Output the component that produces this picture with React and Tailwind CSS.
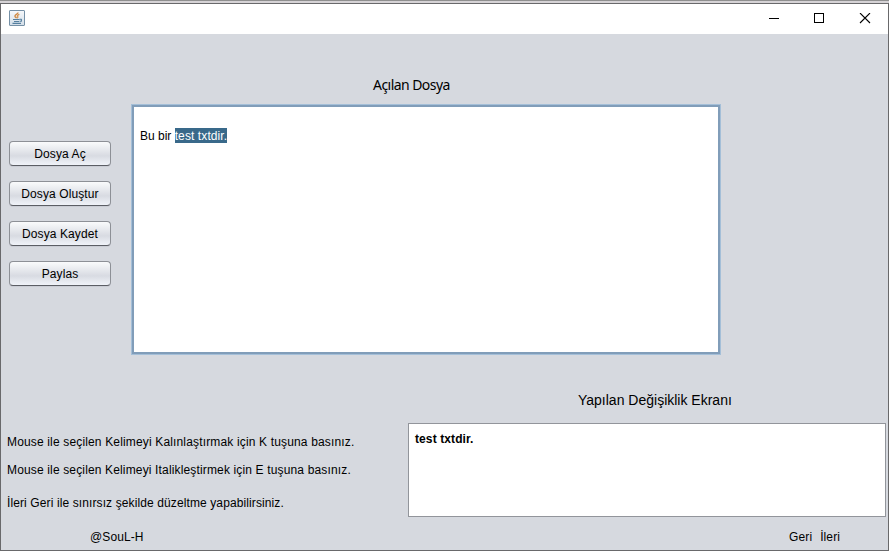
import React from "react";

function JavaIcon() {
  return (
    <svg width="16" height="16" viewBox="0 0 16 16" fill="none">
      <defs>
        <linearGradient id="tile" x1="0" y1="0" x2="0" y2="1">
          <stop offset="0" stopColor="#f6f8fa" />
          <stop offset="1" stopColor="#d3dee8" />
        </linearGradient>
      </defs>
      <rect x="0.5" y="0.5" width="15" height="15" rx="0.5" fill="url(#tile)" stroke="#7590a6" />
      <path d="M8.8 2.5C9.4 4.2 5.6 4.6 6 6.2C6.3 7.2 7.2 7.2 7.3 8.2" stroke="#d08a45" strokeWidth="1.5" />
      <path d="M10.4 4.4C8.6 5 8 5.6 8.7 6.4C9.2 7 8.8 7.7 8.2 8.2" stroke="#d4924f" strokeWidth="1.2" />
      <path d="M4 9.5H10.5M5 11.5H10M3.5 13.3H12" stroke="#557f9f" strokeWidth="1.2" />
      <path d="M10.5 9.3H12.4V11.3H10.5" stroke="#557f9f" strokeWidth="1.1" strokeLinejoin="round" />
    </svg>
  );
}

function TitleBar() {
  return (
    <header className="flex h-[30px] shrink-0 items-start justify-between bg-white pl-2">
      <div className="pt-[6px]">
        <JavaIcon />
      </div>
      <div className="flex pt-[9px] text-black">
        <svg width="46" height="11" shapeRendering="crispEdges">
          <path d="M18 5.5H28" stroke="currentColor" />
        </svg>
        <svg width="46" height="11" shapeRendering="crispEdges">
          <rect x="17.5" y="0.5" width="9" height="9" fill="none" stroke="currentColor" />
        </svg>
        <svg width="45" height="11">
          <path d="M17 0L27 10M27 0L17 10" stroke="currentColor" strokeWidth="1.1" />
        </svg>
      </div>
    </header>
  );
}

function NimbusButton({ children }) {
  return (
    <button className="h-[25px] w-[102px] rounded-[4px] border border-[#8d9096] border-b-[#5b5e64] bg-linear-to-b from-[#fafbfc] via-[#d8dbe2] via-60% to-[#f0f3f9] pt-px text-center leading-[22px] tracking-[0.1px] shadow-[0_1px_0_#c9ccd4]">
      {children}
    </button>
  );
}

export default function App() {
  return (
    <div className="flex h-[551px] w-[889px] flex-col overflow-hidden bg-[#d6d9df] font-['Liberation_Sans',Arial,sans-serif] text-[12px] leading-[16px] whitespace-nowrap text-black">
      <div className="h-[3px] shrink-0 border-t border-[#8f8f8f] bg-[#d6d3d6]" />
      <div className="flex h-[548px] flex-col border border-[#69696b]">
        <TitleBar />
        <section className="flex h-[340px] shrink-0">
          <nav className="flex w-[130px] flex-col gap-[15px] pt-[107px] pl-2">
            <NimbusButton>Dosya Aç</NimbusButton>
            <NimbusButton>Dosya Oluştur</NimbusButton>
            <NimbusButton>Dosya Kaydet</NimbusButton>
            <NimbusButton>Paylas</NimbusButton>
          </nav>
          <div className="w-[590px] pt-[41px]">
            <h1 className="pl-[242px] font-['Noto_Sans',sans-serif] text-[14px] leading-[20px] tracking-[-0.55px]">Açılan Dosya</h1>
            <div className="mt-[9px] h-[251px] border border-[#a4bfd8]">
              <div className="h-full border-2 border-[#819db9] bg-white pt-[21px] pl-[6px]">
                <p className="flex items-start">
                  <span className="whitespace-pre">Bu bir </span>
                  <span className="h-[15px] bg-[#39698a] leading-[16px] tracking-[0.1px] text-white">test txtdir.</span>
                </p>
              </div>
            </div>
          </div>
        </section>
        <section className="flex h-[142px] shrink-0">
          <div className="w-[407px] pt-[60px] pl-[6px]">
            <p className="tracking-[0.155px]">Mouse ile seçilen Kelimeyi Kalınlaştırmak için K tuşuna basınız.</p>
            <p className="mt-3 tracking-[0.15px]">Mouse ile seçilen Kelimeyi Italikleştirmek için E tuşuna basınız.</p>
            <p className="mt-[17px] tracking-[0.11px]">İleri Geri ile sınırsız şekilde düzeltme yapabilirsiniz.</p>
          </div>
          <div className="w-[478px] pt-[16px]">
            <h2 className="pl-[170px] text-[14px] leading-[20px]">Yapılan Değişiklik Ekranı</h2>
            <div className="mt-[13px] h-[94px] border border-[#92959b] bg-white pt-[7px] pl-[6px] font-bold tracking-[0.1px]">test txtdir.</div>
          </div>
        </section>
        <footer className="flex h-[34px] shrink-0 items-start justify-between pt-[13px] pr-[48px] pl-[89px]">
          <span className="tracking-[0.1px]">@SouL-H</span>
          <span className="flex gap-2">
            <span className="tracking-[0.1px]">Geri</span>
            <span className="tracking-[0.1px]">İleri</span>
          </span>
        </footer>
      </div>
    </div>
  );
}
